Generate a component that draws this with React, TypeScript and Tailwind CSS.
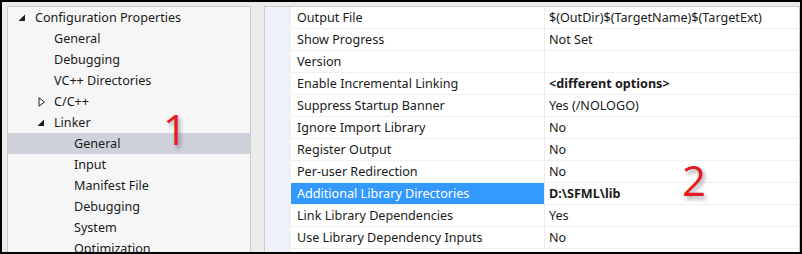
import React from "react";

type TreeItem = { label: string; indent: number; arrow?: "open" | "closed"; selected?: boolean };

const tree: TreeItem[] = [
  { label: "Configuration Properties", indent: 0, arrow: "open" },
  { label: "General", indent: 1 },
  { label: "Debugging", indent: 1 },
  { label: "VC++ Directories", indent: 1 },
  { label: "C/C++", indent: 1, arrow: "closed" },
  { label: "Linker", indent: 1, arrow: "open" },
  { label: "General", indent: 2, selected: true },
  { label: "Input", indent: 2 },
  { label: "Manifest File", indent: 2 },
  { label: "Debugging", indent: 2 },
  { label: "System", indent: 2 },
  { label: "Optimization", indent: 2 },
];

const props: { name: string; value: string; bold?: boolean; selected?: boolean }[] = [
  { name: "Output File", value: "$(OutDir)$(TargetName)$(TargetExt)" },
  { name: "Show Progress", value: "Not Set" },
  { name: "Version", value: "" },
  { name: "Enable Incremental Linking", value: "<different options>", bold: true },
  { name: "Suppress Startup Banner", value: "Yes (/NOLOGO)" },
  { name: "Ignore Import Library", value: "No" },
  { name: "Register Output", value: "No" },
  { name: "Per-user Redirection", value: "No" },
  { name: "Additional Library Directories", value: "D:\\SFML\\lib", bold: true, selected: true },
  { name: "Link Library Dependencies", value: "Yes" },
  { name: "Use Library Dependency Inputs", value: "No" },
];

const indentClass = ["pl-[27px]", "pl-[46px]", "pl-[66px]"];

function Arrow({ kind }: { kind: "open" | "closed" }) {
  if (kind === "open") {
    return (
      <svg width="8" height="8" viewBox="0 0 8 8" className="absolute -left-[17px] top-[6px]">
        <path d="M7 0.5 L7 7 L0.5 7 Z" fill="#1e1e1e" />
      </svg>
    );
  }
  return (
    <svg width="8" height="10" viewBox="0 0 8 10" className="absolute -left-[16px] top-[5px]">
      <path d="M1 0.8 L6.5 5 L1 9.2 Z" fill="none" stroke="#1e1e1e" strokeWidth="1" />
    </svg>
  );
}

export default function App() {
  return (
    <div
      className="relative flex h-[254px] w-[802px] gap-[13px] overflow-hidden border-2 border-black bg-[#ebebeb] pl-[5px] pt-[4px] text-[12.6px] text-[#1a1a1a]"
      style={{ fontFamily: '"Noto Sans", "Open Sans", sans-serif' }}
    >
      <div className="flex h-[260px] w-[244px] shrink-0 flex-col border border-[#c9cbd2] bg-[#f6f6f6]">
        {tree.map((t, i) => (
          <div
            key={i}
            className={`flex h-[21px] items-center pt-px ${t.selected ? "bg-[#cfd1da]" : ""} ${indentClass[t.indent]}`}
          >
            <span className="relative leading-[20px]">
              {t.arrow && <Arrow kind={t.arrow} />}
              {t.label}
            </span>
          </div>
        ))}
      </div>

      <div className="flex h-[260px] flex-1 border border-[#c9cbd2] bg-white">
        <div className="w-[26px] shrink-0 bg-[#eef1f7]" />
        <div className="flex flex-1 flex-col">
          {props.map((p, i) => (
            <div key={i} className="flex h-[22px] border-b border-[#f0f0f0]">
              <div
                className={`w-[254px] shrink-0 border-r border-[#ececec] pl-[6px] pt-px leading-[20px] ${
                  p.selected ? "bg-[#3399ff] text-white" : ""
                }`}
              >
                {p.name}
              </div>
              <div className={`flex-1 pl-[4px] pt-px leading-[20px] ${p.bold ? "font-bold" : ""}`}>{p.value}</div>
            </div>
          ))}
        </div>
      </div>

      <span
        className="absolute left-[161px] top-[106px] text-[42px] leading-none text-[#e31b23] [text-shadow:2px_3px_4px_rgba(0,0,0,0.35)]"
        style={{ fontFamily: '"Open Sans", sans-serif' }}
      >
        1
      </span>
      <span
        className="absolute left-[680px] top-[157px] text-[42px] leading-none text-[#e31b23] [text-shadow:2px_3px_4px_rgba(0,0,0,0.35)]"
        style={{ fontFamily: '"Open Sans", sans-serif' }}
      >
        2
      </span>
    </div>
  );
}
